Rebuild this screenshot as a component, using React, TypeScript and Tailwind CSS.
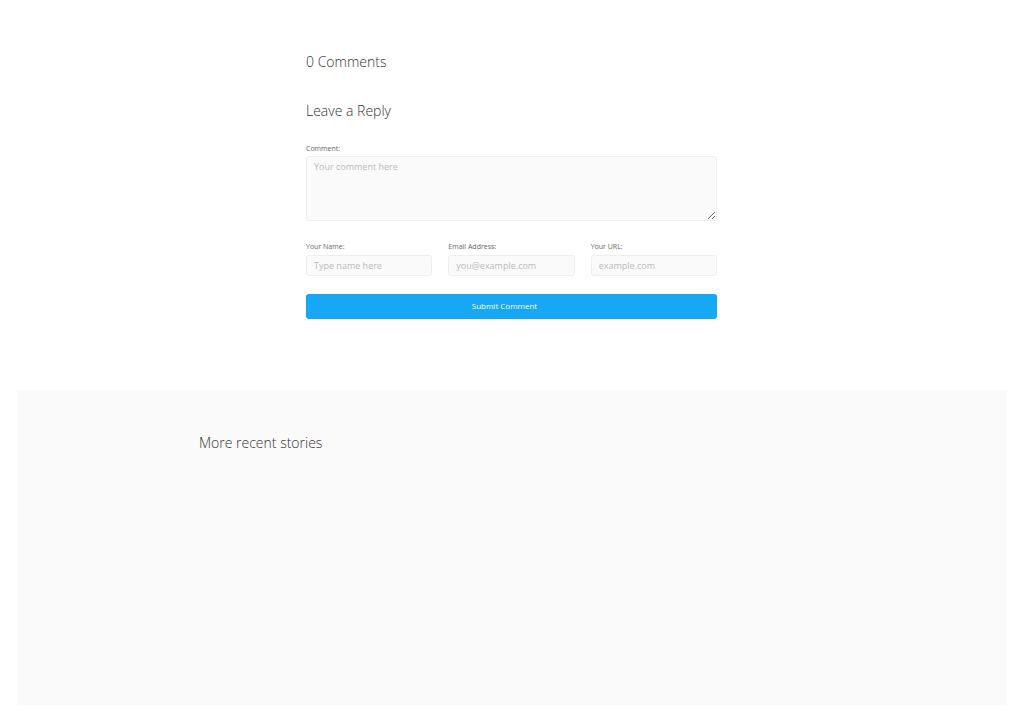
export default function App() {
  return (
    <div className="min-h-[723px] bg-white font-['Open_Sans',sans-serif]">
      <div className="ml-[306px] w-[411px] pt-[52px]">
        <h3 className="text-[14px] font-light leading-[20px] text-[#333]">0 Comments</h3>
        <h3 className="mt-[29px] text-[14px] font-light leading-[20px] text-[#333]">Leave a Reply</h3>

        <form className="mt-[23px]">
          <label className="block text-[7px] font-normal leading-[10px] text-[#666]">Comment:</label>
          <textarea
            placeholder="Your comment here"
            className="mt-[2px] block h-[65px] w-full rounded-[3px] border border-[#eee] bg-[#fafafa] px-[7px] pt-[3px] text-[9px] text-[#333] placeholder:text-[#bbb] outline-none"
          />

          <div className="mt-[21px] grid grid-cols-3 gap-4">
            {[
              ['Your Name:', 'Type name here'],
              ['Email Address:', 'you@example.com'],
              ['Your URL:', 'example.com'],
            ].map(([label, ph]) => (
              <div key={label}>
                <label className="block text-[7px] font-normal leading-[10px] text-[#666]">{label}</label>
                <input
                  placeholder={ph}
                  className="mt-[3px] block h-[21px] w-full rounded-[3px] border border-[#eee] bg-[#fafafa] px-[7px] text-[9px] text-[#333] placeholder:text-[#bbb] outline-none"
                />
              </div>
            ))}
          </div>

          <button
            type="button"
            className="mt-[18px] block h-[25px] w-full rounded-[3px] bg-[#16a8f5] pr-[14px] pb-[1px] text-[8px] font-normal text-white"
          >
            Submit Comment
          </button>
        </form>
      </div>

      <div className="mx-[17px] mt-[71px] h-[315px] bg-[#fafafa] pt-[43px] pl-[182px]">
        <h3 className="text-[14px] font-light leading-[20px] text-[#333]">More recent stories</h3>
      </div>
    </div>
  )
}
